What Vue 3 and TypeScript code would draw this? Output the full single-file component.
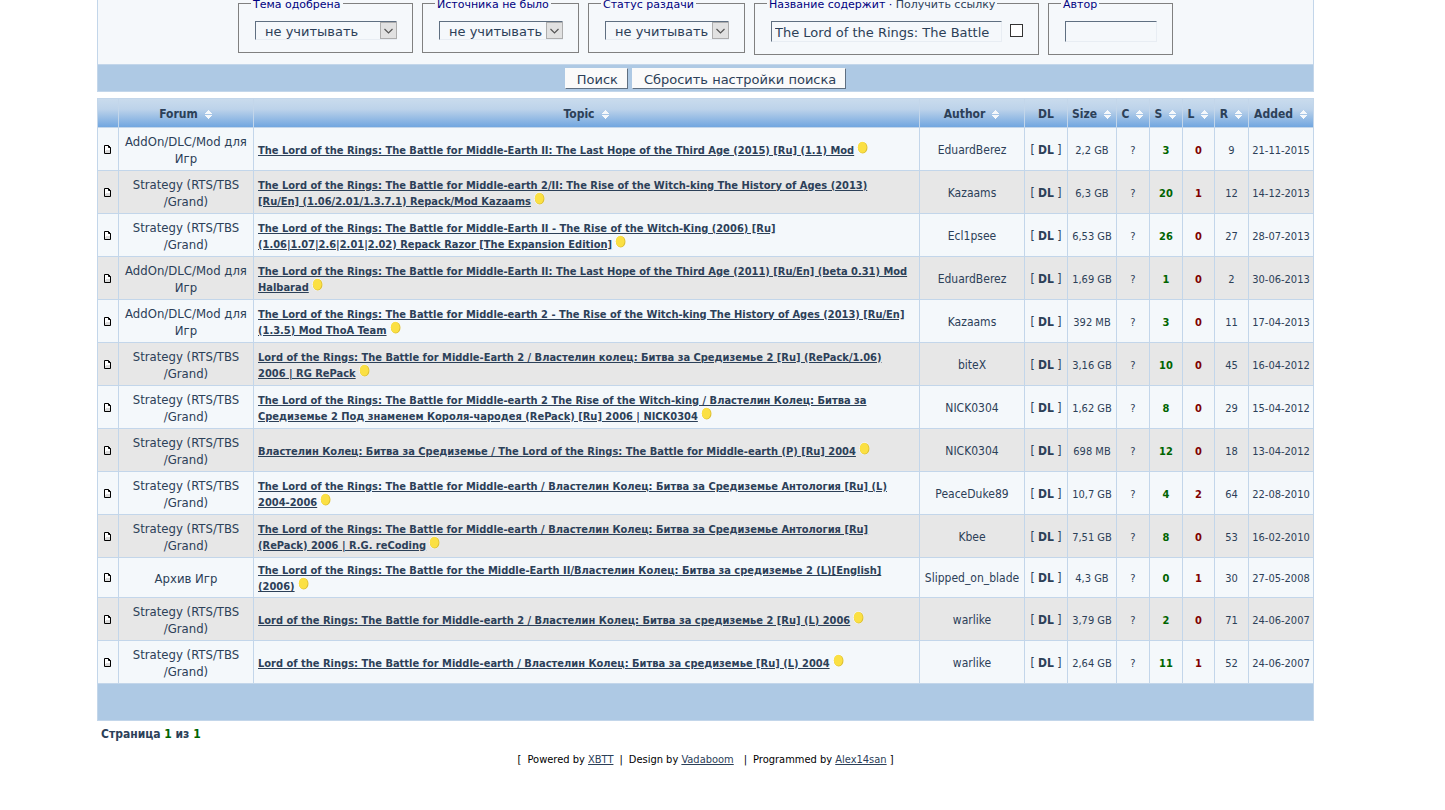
<script setup lang="ts">
interface Release {
  forum: string[]
  title: string[]
  author: string
  size: string
  seeds: number
  leeches: number
  replies: number
  added: string
}

interface Column {
  key: string
  label: string
  sortable: boolean
}

const addon = ['AddOn/DLC/Mod для', 'Игр']
const strategy = ['Strategy (RTS/TBS', '/Grand)']

const filters = [
  { id: 'approved', label: 'Тема одобрена', wide: true },
  { id: 'source', label: 'Источника не было', wide: false },
  { id: 'status', label: 'Статус раздачи', wide: false },
]

const columns: Column[] = [
  { key: 'icon', label: '', sortable: false },
  { key: 'forum', label: 'Forum', sortable: true },
  { key: 'topic', label: 'Topic', sortable: true },
  { key: 'author', label: 'Author', sortable: true },
  { key: 'dl', label: 'DL', sortable: false },
  { key: 'size', label: 'Size', sortable: true },
  { key: 'c', label: 'C', sortable: true },
  { key: 's', label: 'S', sortable: true },
  { key: 'l', label: 'L', sortable: true },
  { key: 'r', label: 'R', sortable: true },
  { key: 'added', label: 'Added', sortable: true },
]

const releases: Release[] = [
  { forum: addon, title: ['The Lord of the Rings: The Battle for Middle-Earth II: The Last Hope of the Third Age (2015) [Ru] (1.1) Mod'], author: 'EduardBerez', size: '2,2 GB', seeds: 3, leeches: 0, replies: 9, added: '21-11-2015' },
  { forum: strategy, title: ['The Lord of the Rings: The Battle for Middle-earth 2/II: The Rise of the Witch-king The History of Ages (2013)', '[Ru/En] (1.06/2.01/1.3.7.1) Repack/Mod Kazaams'], author: 'Kazaams', size: '6,3 GB', seeds: 20, leeches: 1, replies: 12, added: '14-12-2013' },
  { forum: strategy, title: ['The Lord of the Rings: The Battle for Middle-Earth II - The Rise of the Witch-King (2006) [Ru]', '(1.06|1.07|2.6|2.01|2.02) Repack Razor [The Expansion Edition]'], author: 'Ecl1psee', size: '6,53 GB', seeds: 26, leeches: 0, replies: 27, added: '28-07-2013' },
  { forum: addon, title: ['The Lord of the Rings: The Battle for Middle-Earth II: The Last Hope of the Third Age (2011) [Ru/En] (beta 0.31) Mod', 'Halbarad'], author: 'EduardBerez', size: '1,69 GB', seeds: 1, leeches: 0, replies: 2, added: '30-06-2013' },
  { forum: addon, title: ['The Lord of the Rings: The Battle for Middle-earth 2 - The Rise of the Witch-king The History of Ages (2013) [Ru/En]', '(1.3.5) Mod ThoA Team'], author: 'Kazaams', size: '392 MB', seeds: 3, leeches: 0, replies: 11, added: '17-04-2013' },
  { forum: strategy, title: ['Lord of the Rings: The Battle for Middle-Earth 2 / Властелин колец: Битва за Средиземье 2 [Ru] (RePack/1.06)', '2006 | RG RePack'], author: 'biteX', size: '3,16 GB', seeds: 10, leeches: 0, replies: 45, added: '16-04-2012' },
  { forum: strategy, title: ['The Lord of the Rings: The Battle for Middle-earth 2 The Rise of the Witch-king / Властелин Колец: Битва за', 'Средиземье 2 Под знаменем Короля-чародея (RePack) [Ru] 2006 | NICK0304'], author: 'NICK0304', size: '1,62 GB', seeds: 8, leeches: 0, replies: 29, added: '15-04-2012' },
  { forum: strategy, title: ['Властелин Колец: Битва за Средиземье / The Lord of the Rings: The Battle for Middle-earth (P) [Ru] 2004'], author: 'NICK0304', size: '698 MB', seeds: 12, leeches: 0, replies: 18, added: '13-04-2012' },
  { forum: strategy, title: ['The Lord of the Rings: The Battle for Middle-earth / Властелин Колец: Битва за Средиземье Антология [Ru] (L)', '2004-2006'], author: 'PeaceDuke89', size: '10,7 GB', seeds: 4, leeches: 2, replies: 64, added: '22-08-2010' },
  { forum: strategy, title: ['The Lord of the Rings: The Battle for Middle-earth / Властелин Колец: Битва за Средиземье Антология [Ru]', '(RePack) 2006 | R.G. reCoding'], author: 'Kbee', size: '7,51 GB', seeds: 8, leeches: 0, replies: 53, added: '16-02-2010' },
  { forum: ['Архив Игр'], title: ['The Lord of the Rings: The Battle for the Middle-Earth II/Властелин Колец: Битва за средиземье 2 (L)[English]', '(2006)'], author: 'Slipped_on_blade', size: '4,3 GB', seeds: 0, leeches: 1, replies: 30, added: '27-05-2008' },
  { forum: strategy, title: ['Lord of the Rings: The Battle for Middle-earth 2 / Властелин Колец: Битва за средиземье 2 [Ru] (L) 2006'], author: 'warlike', size: '3,79 GB', seeds: 2, leeches: 0, replies: 71, added: '24-06-2007' },
  { forum: strategy, title: ['Lord of the Rings: The Battle for Middle-earth / Властелин Колец: Битва за средиземье [Ru] (L) 2004'], author: 'warlike', size: '2,64 GB', seeds: 11, leeches: 1, replies: 52, added: '24-06-2007' },
]
</script>

<template>
  <main class="page">
    <form class="search" @submit.prevent>
      <div class="filters">
        <fieldset v-for="f in filters" :key="f.id">
          <legend><label :for="f.id">{{ f.label }}</label></legend>
          <span class="picker" :class="{ wide: f.wide }">
            <select :id="f.id"><option>не учитывать</option></select>
            <svg class="arrow" width="17" height="17" viewBox="0 0 17 17" aria-hidden="true">
              <rect x="0.5" y="0.5" width="16" height="16" fill="#e1e1e1" stroke="#adadad" />
              <path d="M4.5 7l4 4 4-4" fill="none" stroke="#555" stroke-width="1.2" />
            </svg>
          </span>
        </fieldset>
        <fieldset>
          <legend><label for="name">Название содержит</label> · <a href="#">Получить ссылку</a></legend>
          <div class="line">
            <input id="name" class="text name" type="text" value="The Lord of the Rings: The Battle" />
            <input class="check" type="checkbox" aria-label="Получить ссылку" />
          </div>
        </fieldset>
        <fieldset>
          <legend><label for="author">Автор</label></legend>
          <div class="line"><input id="author" class="text who" type="text" /></div>
        </fieldset>
      </div>
      <div class="actions">
        <button type="submit">Поиск</button>
        <button type="reset">Сбросить настройки поиска</button>
      </div>
    </form>

    <table class="results">
      <colgroup><col v-for="c in columns" :key="c.key" :class="'w-' + c.key" /></colgroup>
      <thead>
        <tr>
          <th v-for="c in columns" :key="c.key" scope="col">
            <span class="head" :class="{ sortable: c.sortable }">{{ c.label }}
              <svg v-if="c.sortable" width="7" height="9" viewBox="0 0 7 9" aria-hidden="true">
                <path d="M3 0h1v1h1v1h1v1h1v1h-7v-1h1v-1h1v-1h1zM0 5h7v1h-1v1h-1v1h-1v1h-1v-1h-1v-1h-1v-1h-1z" fill="#f5f8fb" />
              </svg>
            </span>
          </th>
        </tr>
      </thead>
      <tbody>
        <tr v-for="(r, i) in releases" :key="i">
          <td class="icon">
            <svg width="8" height="9" viewBox="0 0 8 9" aria-hidden="true">
              <path d="M0.5 0.5H4.5L6.5 2.5V8.5H0.5Z" fill="#fff" />
              <path d="M2 5H6V8H1V6H2Z" fill="#dcdcdc" />
              <path d="M0.5 0.5H4.5L6.5 2.5V8.5H0.5ZM4.5 0.5V2.5H6.5" fill="none" stroke="#000" />
            </svg>
          </td>
          <td class="forum"><template v-for="(t, k) in r.forum" :key="k"><br v-if="k" />{{ t }}</template></td>
          <td class="topic">
            <a href="#"><template v-for="(t, k) in r.title" :key="k"><br v-if="k" />{{ t }}</template></a>
            <svg class="egg" width="11" height="13" viewBox="0 0 11 13" aria-hidden="true">
              <ellipse cx="5.5" cy="6.5" rx="5.5" ry="6.5" fill="#fff" fill-opacity="0.6" />
              <ellipse cx="5.7" cy="6.7" rx="4.8" ry="5.8" fill="#d9bd35" />
              <ellipse cx="5.2" cy="6.3" rx="4.4" ry="5.5" fill="#fbe043" />
            </svg>
          </td>
          <td>{{ r.author }}</td>
          <td class="dl">[ <a href="#">DL</a> ]</td>
          <td class="small">{{ r.size }}</td>
          <td class="small">?</td>
          <td class="seed">{{ r.seeds }}</td>
          <td class="leech">{{ r.leeches }}</td>
          <td class="small">{{ r.replies }}</td>
          <td class="small">{{ r.added }}</td>
        </tr>
      </tbody>
      <tfoot><tr><td :colspan="columns.length"></td></tr></tfoot>
    </table>

    <p class="pager">Страница <b>1</b> из <b>1</b></p>
    <footer>
      <span>[&nbsp; Powered by <a href="#">XBTT</a></span><span>|</span>
      <span>Design by <a href="#">Vadaboom</a></span><span class="bar">|</span>
      <span>Programmed by <a href="#">Alex14san</a> ]</span>
    </footer>
  </main>
</template>

<style>
body {
  background: #fff;
}
</style>

<style scoped>
.page {
  --ink: #2c4058;
  --line: #c3d6ea;
  --bar: #aec9e4;
  --pale: #f5f8fb;
  padding: 0 131px 0 97px;
  color: var(--ink);
  font: 12px/17px "DejaVu Sans Condensed", "DejaVu Sans", sans-serif;
}
.search {
  border: 1px solid var(--line);
  border-top: 0;
  background: var(--pale);
}
.filters {
  display: flex;
  justify-content: center;
  align-items: flex-start;
  gap: 9px;
  height: 69px;
  margin-top: -5px;
}
fieldset {
  margin: 0;
  padding: 10px 15px 12px 16px;
  border: 1px solid #808080;
  min-width: 0;
}
legend {
  margin-left: -4px;
  padding: 3px 2px 0;
  color: #000080;
  font: 11px/13px "DejaVu Sans", sans-serif;
  white-space: nowrap;
}
legend a {
  color: var(--ink);
  text-decoration: none;
}
.picker {
  display: block;
  position: relative;
  width: 124px;
}
.wide {
  width: 142px;
}
.picker select,
.text,
button {
  box-sizing: border-box;
  margin: 0;
  border: 1px solid #e8edf3;
  border-top-color: #5f6f81;
  border-left-color: #5f6f81;
  border-radius: 0;
  background: var(--pale);
  color: var(--ink);
  font: 13px/17px "DejaVu Sans", sans-serif;
}
.picker select {
  display: block;
  appearance: none;
  width: 100%;
  height: 19px;
  padding: 0 0 0 9px;
  line-height: 19px;
}
.arrow {
  position: absolute;
  top: 1px;
  right: 0;
  pointer-events: none;
}
.line {
  display: flex;
  gap: 8px;
  align-items: center;
}
.text {
  height: 21px;
  padding: 2px 3px 0;
}
.name {
  width: 231px;
}
.who {
  width: 92px;
}
.check {
  appearance: none;
  width: 13px;
  height: 13px;
  margin: 0 0 2px;
  border: 1px solid #333;
  background: #fff;
}
.actions {
  display: flex;
  justify-content: center;
  gap: 4px;
  box-sizing: border-box;
  height: 27px;
  padding-top: 3px;
  border-top: 1px solid var(--line);
  background: var(--bar);
}
button {
  height: 21px;
  padding: 2px 9px 0 11px;
  border-color: #fafafa #5f6f81 #5f6f81 #fafafa;
  background: #fafafa;
}
.results {
  width: 100%;
  margin-top: 6px;
  table-layout: fixed;
  border-collapse: collapse;
  border: 1px solid var(--line);
}
.w-icon { width: 21px; }
.w-forum { width: 135px; }
.w-author { width: 105px; }
.w-dl { width: 43px; }
.w-size { width: 49px; }
.w-c, .w-s { width: 33px; }
.w-l { width: 32px; }
.w-r { width: 34px; }
.w-added { width: 65px; }
th {
  height: 26px;
  padding: 2px 0 0;
}
thead tr {
  background: linear-gradient(#c9dbed, #bdd3ea 35%, #6da4df);
}
th + th {
  border-left: 1px solid var(--line);
}
.head {
  display: inline-flex;
  align-items: center;
  gap: 7px;
}
.sortable {
  padding-right: 1px;
}
tbody td {
  padding: 5px 0 3px;
  border: 1px solid var(--line);
  text-align: center;
  white-space: nowrap;
}
tbody tr {
  background: #f4f8fb;
}
tbody tr:nth-child(even) {
  background: #e7e7e7;
}
tbody .icon {
  padding: 4px 0;
}
.icon svg {
  display: block;
  margin: 0 auto;
}
.forum {
  font-size: 13px;
}
tbody .topic {
  padding: 5px 4px 2px;
  text-align: left;
  font: bold 11px/16px "DejaVu Sans Condensed", "DejaVu Sans", sans-serif;
}
.topic a {
  color: var(--ink);
}
.egg {
  margin: -4px 0 0 3px;
  vertical-align: 0;
}
.dl a {
  color: var(--ink);
  font-weight: bold;
  text-decoration: none;
}
.small,
.seed,
.leech {
  font-size: 11px;
}
.seed {
  color: #006400;
  font-weight: bold;
}
.leech {
  color: #800000;
  font-weight: bold;
}
tfoot td {
  height: 36px;
  padding: 0;
  background: var(--bar);
}
.pager {
  margin: 5px 4px 0;
  font-weight: bold;
}
.pager b {
  color: #006400;
}
footer {
  display: flex;
  justify-content: center;
  gap: 6px;
  margin-top: 8px;
  color: #000;
  font-size: 11px;
}
footer a {
  color: var(--ink);
}
.bar {
  margin-left: 4px;
}
</style>
